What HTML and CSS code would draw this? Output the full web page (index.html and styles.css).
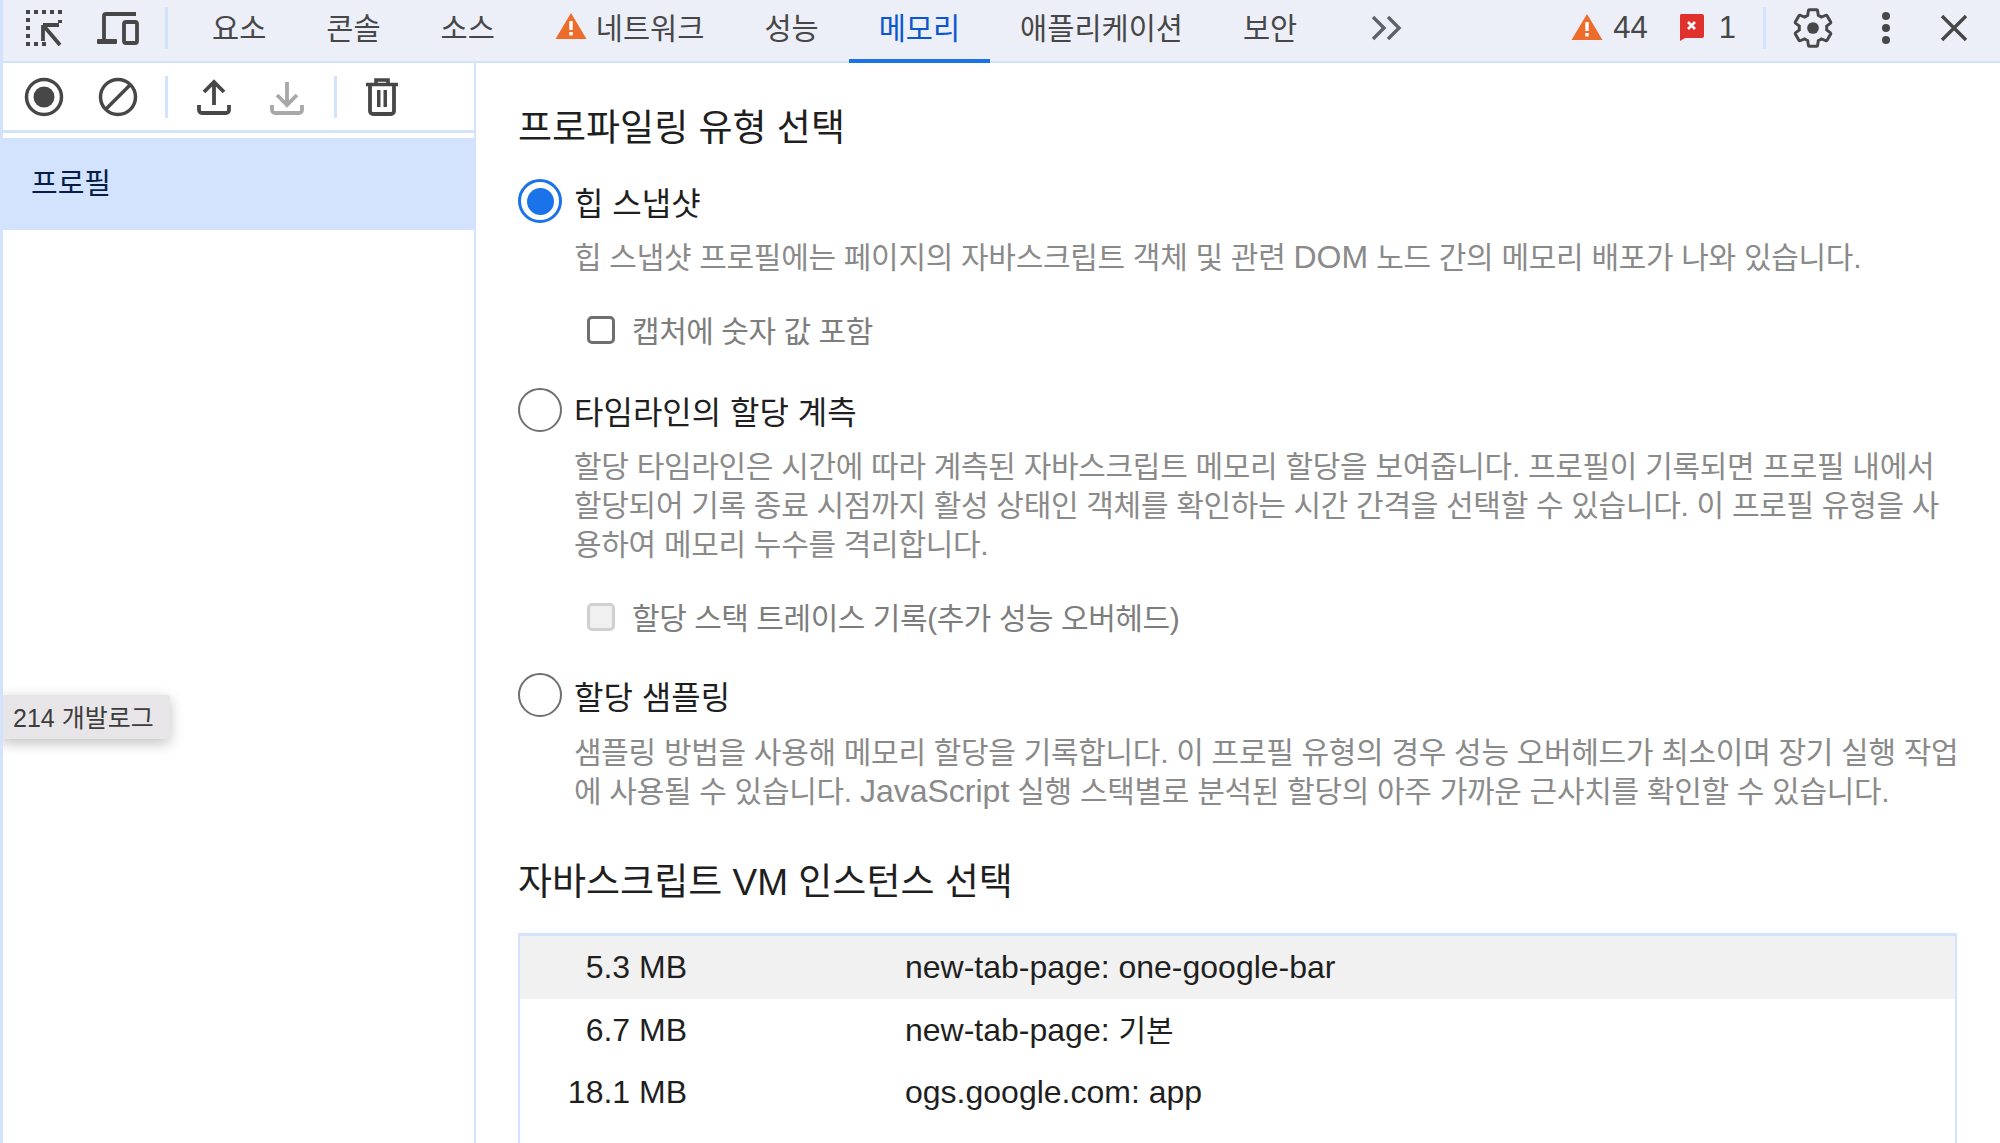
FILE: index.html
```html
<!DOCTYPE html>
<html lang="ko">
<head>
<meta charset="utf-8">
<title>DevTools 메모리</title>
<link rel="stylesheet" href="styles.css">
</head>
<body>
<div class="app">
  <header class="topbar">
    <button class="ib"><svg width="40" height="40" viewBox="0 0 40 40"><g fill="#474747"><rect x="2" y="2" width="4" height="4"/><rect x="10" y="2" width="4" height="4"/><rect x="18" y="2" width="4" height="4"/><rect x="26" y="2" width="4" height="4"/><rect x="34" y="2" width="4" height="4"/><rect x="2" y="10" width="4" height="4"/><rect x="2" y="18" width="4" height="4"/><rect x="2" y="26" width="4" height="4"/><rect x="2" y="34" width="4" height="4"/><rect x="10" y="34" width="4" height="4"/><rect x="18" y="34" width="4" height="4"/><rect x="34" y="12" width="4" height="3"/></g><path d="M19 17h16M19 17v16M19 17l17 20" fill="none" stroke="#474747" stroke-width="3.8"/></svg></button>
    <button class="ib"><svg width="44" height="36" viewBox="0 0 44 36"><path d="M8 30V6a2 2 0 0 1 2-2h30" fill="none" stroke="#474747" stroke-width="3.8"/><rect x="1" y="29" width="20" height="5" rx="1" fill="#474747"/><rect x="28" y="12" width="13" height="21" rx="2" fill="none" stroke="#474747" stroke-width="3.8"/></svg></button>
    <span class="divider"></span>
    <nav class="tabs">
      <a class="tab">요소</a>
      <a class="tab">콘솔</a>
      <a class="tab">소스</a>
      <a class="tab"><svg class="warn" width="32" height="28" viewBox="0 0 32 28"><path d="M16 1 31.500 27H.5z" fill="#ee6c2b"/><rect x="14.300" y="9" width="3.400" height="9" fill="#fff"/><rect x="14.300" y="20" width="3.400" height="3.400" fill="#fff"/></svg>네트워크</a>
      <a class="tab">성능</a>
      <a class="tab active">메모리</a>
      <a class="tab">애플리케이션</a>
      <a class="tab">보안</a>
      <a class="more"><svg width="32" height="28" viewBox="0 0 32 28"><path d="M2 3l11 11L2 25M17 3l11 11-11 11" fill="none" stroke="#5f6368" stroke-width="3.400"/></svg></a>
    </nav>
    <div class="status">
      <svg width="32" height="28" viewBox="0 0 32 28"><path d="M16 1 31.500 27H.5z" fill="#ee6c2b"/><rect x="14.300" y="9" width="3.400" height="9" fill="#fff"/><rect x="14.300" y="20" width="3.400" height="3.400" fill="#fff"/></svg>
      <span class="count c44">44</span>
      <svg width="26" height="28" viewBox="0 0 26 28"><path d="M2 1h21a2 2 0 0 1 2 2v20a2 2 0 0 1-2 2H6l-5 3V3a2 2 0 0 1 1-2z" fill="#e0312d"/><path d="M9 9l7 7M16 9l-7 7" stroke="#fff" stroke-width="2.600" fill="none"/></svg>
      <span class="count c1">1</span>
      <span class="divider status-div"></span>
      <button class="ib gear"><svg width="44" height="44" viewBox="0 0 24 24"><path d="M19.430 12.980c.04-.32.07-.64.07-.98 0-.34-.03-.66-.07-.98l2.110-1.650c.19-.15.24-.42.12-.64l-2-3.460c-.09-.16-.26-.25-.44-.25-.06 0-.12.01-.17.03l-2.490 1c-.52-.4-1.080-.73-1.690-.98l-.38-2.650C14.460 2.180 14.250 2 14 2h-4c-.25 0-.46.18-.49.42l-.38 2.650c-.61.25-1.170.59-1.690.98l-2.490-1c-.06-.02-.12-.03-.18-.03-.17 0-.34.09-.43.25l-2 3.460c-.13.22-.07.49.12.64l2.110 1.650c-.04.32-.07.65-.07.98 0 .33.03.66.07.98l-2.110 1.650c-.19.15-.24.42-.12.64l2 3.460c.09.16.26.25.44.25.06 0 .12-.01.17-.03l2.490-1c.52.4 1.080.73 1.690.98l.38 2.650c.03.24.24.42.49.42h4c.25 0 .46-.18.49-.42l.38-2.650c.61-.25 1.170-.59 1.690-.98l2.490 1c.06.02.12.03.18.03.17 0 .34-.09.43-.25l2-3.460c.12-.22.07-.49-.12-.64l-2.110-1.650z" fill="none" stroke="#474747" stroke-width="1.600"/><circle cx="12" cy="12" r="3.200" fill="#474747"/></svg></button>
      <button class="ib dots"><svg width="10" height="34" viewBox="0 0 10 34"><circle cx="5" cy="5" r="4" fill="#474747"/><circle cx="5" cy="17" r="4" fill="#474747"/><circle cx="5" cy="29" r="4" fill="#474747"/></svg></button>
      <button class="ib close"><svg width="28" height="28" viewBox="0 0 28 28"><path d="M2 2l24 24M26 2L2 26" stroke="#474747" stroke-width="3.400" fill="none"/></svg></button>
    </div>
  </header>
  <div class="main">
    <aside class="side">
      <div class="subbar">
        <button class="ib"><svg width="40" height="40" viewBox="0 0 40 40"><circle cx="20" cy="20" r="17.500" fill="none" stroke="#474747" stroke-width="3.500"/><circle cx="20" cy="20" r="10.500" fill="#474747"/></svg></button>
        <button class="ib"><svg width="40" height="40" viewBox="0 0 40 40"><circle cx="20" cy="20" r="17.500" fill="none" stroke="#474747" stroke-width="3.500"/><path d="M8 32 32 8" stroke="#474747" stroke-width="3.500"/></svg></button>
        <span class="divider"></span>
        <button class="ib up"><svg width="34" height="36" viewBox="0 0 34 36"><path d="M17 26V3M7 13 17 3l10 10" fill="none" stroke="#474747" stroke-width="3.800"/><path d="M2 26v5a3 3 0 0 0 3 3h24a3 3 0 0 0 3-3v-5" fill="none" stroke="#474747" stroke-width="3.800"/></svg></button>
        <button class="ib down"><svg width="34" height="36" viewBox="0 0 34 36"><path d="M17 3v23M7 16l10 10 10-10" fill="none" stroke="#a8a8a8" stroke-width="3.800"/><path d="M2 26v5a3 3 0 0 0 3 3h24a3 3 0 0 0 3-3v-5" fill="none" stroke="#a8a8a8" stroke-width="3.800"/></svg></button>
        <span class="divider"></span>
        <button class="ib trash"><svg width="34" height="38" viewBox="0 0 34 38"><path d="M1 6.500h32M11 5V2h12v3" fill="none" stroke="#474747" stroke-width="3.600"/><path d="M5 7v26a3 3 0 0 0 3 3h18a3 3 0 0 0 3-3V7" fill="none" stroke="#474747" stroke-width="3.800"/><rect x="12" y="12" width="3.500" height="17" fill="#474747"/><rect x="18.500" y="12" width="3.500" height="17" fill="#474747"/></svg></button>
      </div>
      <div class="profile-row"><span>프로필</span></div>
      <div class="tooltip">214 개발로그</div>
    </aside>
    <section class="content">
      <h2 class="h-first">프로파일링 유형 선택</h2>
      <div class="opt opt1"><span class="radio on"></span><label>힙 스냅샷</label></div>
      <p class="desc d1">힙 스냅샷 프로필에는 페이지의 자바스크립트 객체 및 관련 <span class="lat">DOM</span> 노드 간의 메모리 배포가 나와 있습니다.</p>
      <div class="chk c-a"><span class="box"></span><span>캡처에 숫자 값 포함</span></div>
      <div class="opt opt2"><span class="radio"></span><label>타임라인의 할당 계측</label></div>
      <p class="desc d2">할당 타임라인은 시간에 따라 계측된 자바스크립트 메모리 할당을 보여줍니다. 프로필이 기록되면 프로필 내에서<br>할당되어 기록 종료 시점까지 활성 상태인 객체를 확인하는 시간 간격을 선택할 수 있습니다. 이 프로필 유형을 사<br>용하여 메모리 누수를 격리합니다.</p>
      <div class="chk c-b disabled"><span class="box"></span><span>할당 스택 트레이스 기록(추가 성능 오버헤드)</span></div>
      <div class="opt opt3"><span class="radio"></span><label>할당 샘플링</label></div>
      <p class="desc d3">샘플링 방법을 사용해 메모리 할당을 기록합니다. 이 프로필 유형의 경우 성능 오버헤드가 최소이며 장기 실행 작업<br>에 사용될 수 있습니다. <span class="lat">JavaScript</span> 실행 스택별로 분석된 할당의 아주 가까운 근사치를 확인할 수 있습니다.</p>
      <h2 class="h-second">자바스크립트 VM 인스턴스 선택</h2>
      <div class="table">
        <div class="row sel"><span class="size">5.3 MB</span><span>new-tab-page: one-google-bar</span></div>
        <div class="row"><span class="size">6.7 MB</span><span>new-tab-page: <span class="ko">기본</span></span></div>
        <div class="row"><span class="size">18.1 MB</span><span>ogs.google.com: app</span></div>
      </div>
    </section>
  </div>
</div>
</body>
</html>
```

FILE: styles.css
```css
* { box-sizing: border-box; }
html, body { margin: 0; height: 100%; }
body {
  font-family: "Liberation Sans", "Noto Sans CJK KR", sans-serif;
  background: #fff;
  color: #1f1f1f;
  overflow: hidden;
}
.app {
  height: 1143px;
  display: flex;
  flex-direction: column;
  border-left: 3px solid #d3e3fd;
  overflow: hidden;
}
.ib {
  width: 74px;
  flex: none;
  border: 0;
  padding: 0;
  background: none;
  display: flex;
  align-items: center;
  justify-content: center;
}
.divider {
  flex: none;
  width: 3px;
  height: 42px;
  background: #d3e3fd;
  margin-left: 10px;
}
.topbar {
  flex: none;
  height: 63px;
  background: #eceff7;
  border-bottom: 2px solid #d3e3fd;
  display: flex;
  align-items: center;
  padding-left: 4px;
  color: #474747;
}
.topbar .divider { margin-top: -5px; }
.topbar .ib { margin-top: -5px; }
.tabs {
  display: flex;
  align-self: stretch;
  margin-left: 15px;
}
.tab {
  display: flex;
  align-items: center;
  padding: 0 30px 12px;
  font-size: 29.5px;
  height: 63px;
  white-space: nowrap;
}
.tab:first-child { padding-left: 29px; }
.tab.active {
  color: #0b57d0;
  border-bottom: 4px solid #1a73e8;
  padding-bottom: 8px;
}
.warn { margin-right: 9px; margin-left: 0; }
.more { display: flex; align-items: center; margin-left: 44px; padding-bottom: 5px; }
.status {
  margin-left: auto;
  display: flex;
  align-items: center;
  align-self: stretch;
  padding-right: 15px;
  font-size: 31px;
}
.status > svg { margin-top: -7px; }
.count { margin-top: -5px; }
.c44 { margin-left: 10px; margin-right: 31px; }
.c1 { margin-left: 14px; }
.status-div { margin-left: 27px; margin-right: 11px; }
.gear { width: 72px; }
.dots { width: 74px; }
.close { width: 62px; }
.main { flex: 1; display: flex; min-height: 0; }
.side {
  position: relative;
  width: 473px;
  flex: none;
  border-right: 2px solid #d3e3fd;
}
.subbar {
  height: 70px;
  padding-left: 4px;
  display: flex;
  align-items: center;
  border-bottom: 3px solid #d3e3fd;
}
.subbar .up { margin-left: 9px; }
.subbar .down { margin-left: -1px; }
.subbar .trash { margin-left: 8px; }
.profile-row {
  margin-top: 5px;
  height: 92px;
  background: #d3e3fd;
  color: #041e49;
  font-size: 29px;
  display: flex;
  align-items: center;
  padding: 0 0 7px 28px;
}
.tooltip {
  position: absolute;
  left: -3px;
  top: 632px;
  width: 170px;
  height: 44px;
  padding: 0 0 3px 13px;
  display: flex;
  align-items: center;
  white-space: nowrap;
  background: #e8e5e8;
  color: #3c3c3c;
  font-size: 25px;
  border-radius: 0 3px 3px 0;
  box-shadow: 0 4px 14px rgba(0, 0, 0, 0.25);
}
.content {
  flex: 1;
  min-width: 0;
  padding: 0 43px 0 42px;
}
h2 {
  font-size: 37px;
  font-weight: 400;
  margin: 0;
  line-height: 50px;
  white-space: nowrap;
}
.h-first { margin-top: 41px; }
.h-second { margin-top: 47px; }
.opt { display: flex; align-items: center; height: 46px; font-size: 32px; color: #1f1f1f; }
.opt label { margin-left: 12px; }
.opt1 { margin-top: 24px; }
.opt2 { margin-top: 38px; }
.opt3 { margin-top: 36px; }
.radio {
  flex: none;
  width: 44px;
  height: 44px;
  border-radius: 50%;
  border: 2.5px solid #6f6f6f;
  background: #fff;
}
.radio.on {
  border: 3px solid #1a73e8;
  position: relative;
}
.radio.on::after {
  content: "";
  position: absolute;
  left: 5.5px;
  top: 5.5px;
  width: 27px;
  height: 27px;
  border-radius: 50%;
  background: #1a73e8;
}
.desc {
  margin: 14px 0 0 56px;
  font-size: 30px;
  line-height: 39px;
  letter-spacing: -0.3px;
  color: #8a8a8a;
  white-space: nowrap;
}
.d3 { margin-top: 15px; }
.lat { font-size: 32px; line-height: 30px; letter-spacing: 0; }
.chk {
  display: flex;
  align-items: center;
  margin-left: 69px;
  height: 40px;
  font-size: 30px;
  letter-spacing: -0.45px;
  color: #7d7d7d;
  margin-top: 32px;
}
.box {
  flex: none;
  width: 28px;
  height: 28px;
  margin: 2px 17px 0 0;
  border: 3px solid #6f6f6f;
  border-radius: 5px;
}
.disabled .box { border-color: #d0d0d0; background: #f0f0f0; }
.table {
  margin-top: 25px;
  height: 300px;
  border-top: 3px solid #d3e3fd;
  border-left: 2px solid #d3e3fd;
  border-right: 2px solid #d3e3fd;
  font-size: 32px;
  color: #1f1f1f;
}
.row {
  height: 62.5px;
  line-height: 40px;
  display: flex;
  align-items: center;
  white-space: nowrap;
}
.sel { background: #f1f1f1; }
.size { width: 167px; text-align: right; margin-right: 218px; }
.ko { font-size: 30px; line-height: 30px; }
```
